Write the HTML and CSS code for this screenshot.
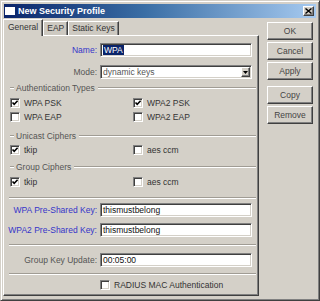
FILE: index.html
```html
<!DOCTYPE html>
<html lang="en">
<head>
    <meta charset="UTF-8">
    <title>New Security Profile</title>
    <link rel="stylesheet" href="styles.css">
</head>
<body>
    <div class="window">
        <div class="titlebar">
            <span class="app-icon"></span>
            <span class="title">New Security Profile</span>
            <span class="close-btn">
                <svg width="7" height="6" viewBox="0 0 7 6"><path d="M0.5 0.5 L6.5 5.5 M6.5 0.5 L0.5 5.5" stroke="#000" stroke-width="1.4" fill="none"/></svg>
            </span>
        </div>

        <div class="body">
            <div class="main">
                <div class="tabs">
                    <div class="tab active">General</div>
                    <div class="tab">EAP</div>
                    <div class="tab">Static Keys</div>
                </div>

                <div class="panel">
                    <div class="form-row mt-6">
                        <span class="label blue">Name:</span>
                        <div class="field"><span class="selected">WPA</span></div>
                    </div>
                    <div class="form-row mt-8">
                        <span class="label">Mode:</span>
                        <div class="field select">
                            <span class="select-text">dynamic keys</span>
                            <span class="select-arrow">
                                <svg width="5" height="3" viewBox="0 0 5 3"><path d="M0 0 H5 L2.5 3 Z" fill="#000"/></svg>
                            </span>
                        </div>
                    </div>

                    <div class="group-header mt-4">Authentication Types</div>
                    <div class="check-row mt-3">
                        <label class="check"><span class="box"><svg class="tick" viewBox="0 0 8 8"><path d="M1.5 3.5 L3.2 5.3 L6.6 1.8"/></svg></span>WPA PSK</label>
                        <label class="check"><span class="box"><svg class="tick" viewBox="0 0 8 8"><path d="M1.5 3.5 L3.2 5.3 L6.6 1.8"/></svg></span>WPA2 PSK</label>
                    </div>
                    <div class="check-row">
                        <label class="check"><span class="box"></span>WPA EAP</label>
                        <label class="check"><span class="box"></span>WPA2 EAP</label>
                    </div>

                    <div class="group-header mt-7">Unicast Ciphers</div>
                    <div class="check-row mt-2">
                        <label class="check"><span class="box"><svg class="tick" viewBox="0 0 8 8"><path d="M1.5 3.5 L3.2 5.3 L6.6 1.8"/></svg></span>tkip</label>
                        <label class="check"><span class="box"></span>aes ccm</label>
                    </div>

                    <div class="group-header mt-5">Group Ciphers</div>
                    <div class="check-row mt-3">
                        <label class="check"><span class="box"><svg class="tick" viewBox="0 0 8 8"><path d="M1.5 3.5 L3.2 5.3 L6.6 1.8"/></svg></span>tkip</label>
                        <label class="check"><span class="box"></span>aes ccm</label>
                    </div>

                    <div class="separator mt-8"></div>

                    <div class="form-row mt-4">
                        <span class="label blue">WPA Pre-Shared Key:</span>
                        <div class="field">thismustbelong</div>
                    </div>
                    <div class="form-row mt-6">
                        <span class="label blue">WPA2 Pre-Shared Key:</span>
                        <div class="field">thismustbelong</div>
                    </div>

                    <div class="separator mt-7"></div>

                    <div class="form-row mt-7">
                        <span class="label">Group Key Update:</span>
                        <div class="field">00:05:00</div>
                    </div>

                    <div class="separator mt-6"></div>

                    <div class="check-row single mt-3">
                        <label class="check"><span class="box"></span>RADIUS MAC Authentication</label>
                    </div>
                </div>
            </div>

            <div class="buttons">
                <div class="btn">OK</div>
                <div class="btn">Cancel</div>
                <div class="btn">Apply</div>
                <div class="btn mt-4">Copy</div>
                <div class="btn">Remove</div>
            </div>
        </div>
    </div>
</body>
</html>
```

FILE: styles.css
```css
body {
    margin: 0;
    background-color: #d4d0c8;
    font-family: "Liberation Sans", Arial, sans-serif;
    font-size: 8.5px;
    color: #333;
}

.window {
    width: 320px;
    height: 301px;
    box-sizing: border-box;
    border: 1px solid;
    border-color: #d4d0c8 #404040 #404040 #d4d0c8;
    box-shadow: inset 1px 1px 0 #fff, inset -1px -1px 0 #808080;
    padding: 2px;
    display: flex;
    flex-direction: column;
}

/* title bar */
.titlebar {
    height: 14px;
    margin: 1px 1px 0;
    padding: 0 2px 0 1px;
    background: linear-gradient(to right, #0a246a, #3a6ea5 45%, #a6caf0);
    display: flex;
    align-items: center;
}

.app-icon {
    width: 10px;
    height: 8px;
    background-color: #fff;
}

.title {
    flex: 1;
    margin-left: 3px;
    color: #fff;
    font-weight: bold;
    font-size: 9px;
}

.close-btn {
    width: 11px;
    height: 10px;
    box-sizing: border-box;
    background-color: #d4d0c8;
    border: 1px solid;
    border-color: #fff #404040 #404040 #fff;
    box-shadow: inset -1px -1px 0 #808080;
    display: flex;
    align-items: center;
    justify-content: center;
}

.close-btn svg {
    display: block;
}

/* body */
.body {
    flex: 1;
    display: flex;
}

.main {
    width: 256px;
    display: flex;
    flex-direction: column;
}

.tabs {
    height: 16px;
    margin-top: 1px;
    display: flex;
    align-items: flex-end;
    position: relative;
    z-index: 1;
}

.tab {
    height: 14px;
    box-sizing: border-box;
    padding: 0 3px;
    line-height: 13px;
    border: 1px solid;
    border-bottom: none;
    border-color: #fff #404040 transparent #fff;
    box-shadow: inset -1px 0 0 #808080;
    background-color: #cdc9c1;
    color: #333;
}

.tab.active {
    height: 17px;
    margin-bottom: -1px;
    padding: 0 4px;
    line-height: 14px;
    background-color: #d4d0c8;
}

.panel {
    height: 261px;
    box-sizing: border-box;
    border: 1px solid;
    border-color: #fff #404040 #404040 #fff;
    box-shadow: inset -1px -1px 0 #808080;
    padding: 1px;
    display: flex;
    flex-direction: column;
}

/* rows */
.form-row {
    height: 14px;
    display: grid;
    grid-template-columns: 92px 152px;
    column-gap: 3px;
    align-items: center;
}

.label {
    text-align: right;
    color: #555;
    white-space: nowrap;
}

.label.blue {
    color: #3434c8;
}

.field {
    height: 14px;
    box-sizing: border-box;
    background-color: #fff;
    border: 1px solid;
    border-color: #808080 #fff #fff #808080;
    box-shadow: inset 1px 1px 0 #404040, inset -1px -1px 0 #d4d0c8;
    padding-left: 2px;
    line-height: 12px;
    color: #111;
    white-space: nowrap;
    overflow: hidden;
}

.selected {
    background-color: #0a246a;
    color: #fff;
    padding: 0 1px;
}

.field.select {
    display: flex;
    align-items: center;
    padding-right: 1px;
    color: #555;
}

.select-text {
    flex: 1;
}

.select-arrow {
    width: 9px;
    height: 10px;
    box-sizing: border-box;
    border: 1px solid;
    border-color: #fff #404040 #404040 #fff;
    box-shadow: inset -1px -1px 0 #808080;
    background-color: #d4d0c8;
    display: flex;
    align-items: center;
    justify-content: center;
}

.select-arrow svg {
    display: block;
}

.group-header {
    height: 10px;
    padding-left: 5px;
    display: flex;
    align-items: center;
    gap: 2px;
    color: #555;
    white-space: nowrap;
}

.group-header::before,
.group-header::after {
    content: '';
    height: 0;
    border-top: 1px solid #a09c94;
    border-bottom: 1px solid #fff;
}

.group-header::before {
    width: 4px;
}

.group-header::after {
    flex: 1;
    margin-left: 1px;
    margin-right: 1px;
}

.check-row {
    height: 14px;
    padding-left: 5px;
    display: grid;
    grid-template-columns: 123px 1fr;
    align-items: center;
}

.check-row.single {
    padding-left: 95px;
    grid-template-columns: 1fr;
}

.check {
    display: flex;
    align-items: center;
    gap: 4px;
    color: #333;
    white-space: nowrap;
}

.box {
    width: 10px;
    height: 10px;
    box-sizing: border-box;
    background-color: #fff;
    border: 1px solid;
    border-color: #808080 #fff #fff #808080;
    box-shadow: inset 1px 1px 0 #404040, inset -1px -1px 0 #d4d0c8;
}

.tick {
    display: block;
    width: 8px;
    height: 8px;
}

.tick path {
    fill: none;
    stroke: #000;
    stroke-width: 1.6;
}

.separator {
    height: 0;
    margin-left: 4px;
    margin-right: 1px;
    border-top: 1px solid #a09c94;
    border-bottom: 1px solid #fff;
}

/* spacing helpers */
.mt-2 { margin-top: 2px; }
.mt-3 { margin-top: 3px; }
.mt-4 { margin-top: 4px; }
.mt-5 { margin-top: 5px; }
.mt-6 { margin-top: 6px; }
.mt-7 { margin-top: 7px; }
.mt-8 { margin-top: 8px; }

/* right-hand buttons */
.buttons {
    width: 46px;
    margin-left: 8px;
    padding-top: 4px;
    display: flex;
    flex-direction: column;
    gap: 2px;
}

.btn {
    height: 18px;
    box-sizing: border-box;
    border: 1px solid;
    border-color: #fff #404040 #404040 #fff;
    box-shadow: inset -1px -1px 0 #808080;
    text-align: center;
    line-height: 16px;
    color: #444;
}
```
